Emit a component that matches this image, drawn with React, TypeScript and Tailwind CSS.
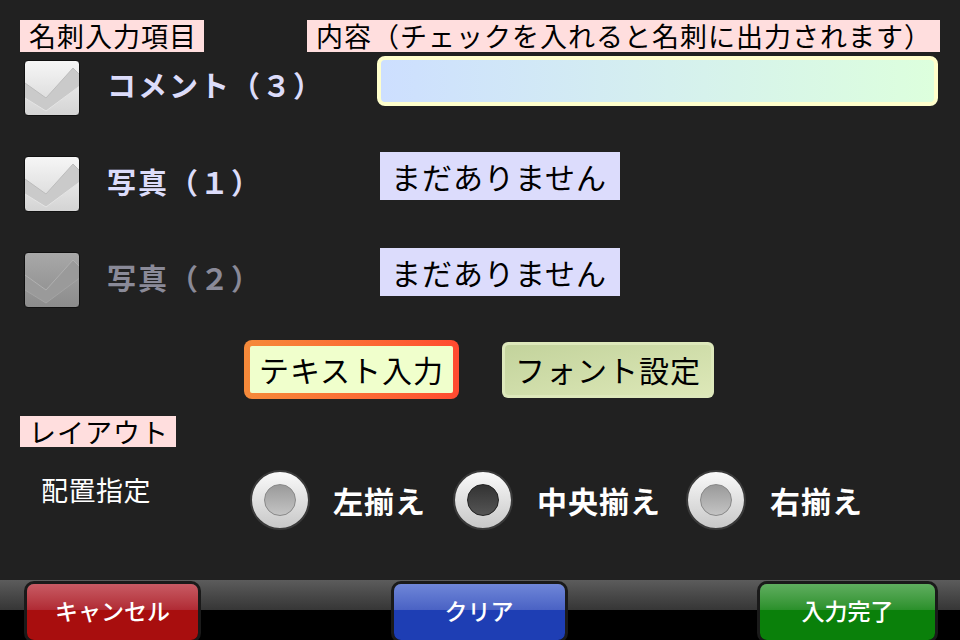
const font = { fontFamily: '"Noto Sans CJK JP", "Noto Sans", sans-serif' };

const CheckBox = ({ disabled }: { disabled?: boolean }) => (
  <div
    className={
      "w-[56px] h-[56px] rounded-[4px] border border-[#111] overflow-hidden " +
      (disabled
        ? "bg-gradient-to-b from-[#a8a8a8] to-[#8c8c8c]"
        : "bg-gradient-to-b from-[#f6f6f6] to-[#d4d4d4]")
    }
  >
    <svg width="56" height="56" viewBox="0 0 56 56">
      <polygon
        points="0,22 21,37 48,7 56,15 56,24 21,50 0,37"
        fill={disabled ? "#9a9a9a" : "#cacaca"}
      />
      <polyline
        points="0,22 21,37 48,7 56,15"
        fill="none"
        stroke={disabled ? "#b0b0b0" : "#bcbcbc"}
        strokeWidth="1"
      />
      <polyline
        points="0,37 21,50 56,24"
        fill="none"
        stroke={disabled ? "#a4a4a4" : "#e4e4e4"}
        strokeWidth="1"
      />
    </svg>
  </div>
);

const Radio = ({ checked }: { checked?: boolean }) => (
  <div className="w-[60px] h-[60px] rounded-full border-2 border-[#3a3a3a] bg-gradient-to-b from-[#fafafa] to-[#c8c8c8] flex items-center justify-center">
    <div
      className={
        "w-[32px] h-[32px] rounded-full border " +
        (checked
          ? "border-[#222] bg-gradient-to-b from-[#333] to-[#555]"
          : "border-[#888] bg-gradient-to-b from-[#9a9a9a] to-[#c4c4c4]")
      }
    />
  </div>
);

const ToolButton = ({ label, tone, width }: { label: string; tone: string; width: string }) => (
  <div className={`${width} h-[62px] rounded-[10px] border-[3px] border-[#1a1a1a] overflow-hidden flex flex-col relative`}>
    <div className={`h-[26px] ${tone === "red" ? "bg-gradient-to-b from-[#c85a64] to-[#b02a34]" : tone === "blue" ? "bg-gradient-to-b from-[#6f86d8] to-[#4a62c4]" : "bg-gradient-to-b from-[#5fae5f] to-[#2a902a]"}`} />
    <div className={`flex-1 ${tone === "red" ? "bg-[#a80e0e]" : tone === "blue" ? "bg-[#1e3eb4]" : "bg-[#0a800a]"}`} />
    <div className="absolute inset-x-0 top-0 h-[52px] flex items-center justify-center text-white text-[23px] font-medium" style={font}>
      {label}
    </div>
  </div>
);

const App = () => {
  return (
    <div className="w-[960px] h-[640px] bg-[#212121] flex flex-col overflow-hidden [text-spacing-trim:space-all]" style={font}>
      <div className="flex-1 flex flex-col">
        <div className="flex mt-[20px] ml-[20px]">
          <div className="w-[184px] h-[32px] bg-[#ffdede] text-black text-[27px] leading-[32px] pl-[9px] tracking-[1px] whitespace-nowrap">
            名刺入力項目
          </div>
          <div className="ml-[103px] w-[633px] h-[32px] bg-[#ffdede] text-black text-[27px] leading-[32px] pl-[9px] tracking-[1px] whitespace-nowrap">
            内容（チェックを入れると名刺に出力されます）
          </div>
        </div>

        <div className="flex h-[96px] mt-[4px]">
          <div className="ml-[24px] mt-[4px]">
            <CheckBox />
          </div>
          <div className="ml-[27px] w-[270px] h-[58px] flex items-center text-[29px] font-bold tracking-[2px] text-[#dcdcfa] whitespace-nowrap">
            コメント（３）
          </div>
          <div className="w-[561px] h-[50px] rounded-[8px] border-[4px] border-[#ffffcc] bg-gradient-to-r from-[#cddfff] to-[#ddffdd]" />
        </div>

        <div className="flex h-[96px]">
          <div className="ml-[24px] mt-[4px]">
            <CheckBox />
          </div>
          <div className="ml-[27px] w-[273px] h-[60px] flex items-center text-[29px] font-bold tracking-[2px] text-[#dcdcfa] whitespace-nowrap">
            写真（１）
          </div>
          <div className="w-[240px] h-[48px] bg-[#dcdcfc] text-black text-[30px] leading-[48px] pl-[11px] tracking-[1px] whitespace-nowrap">
            まだありません
          </div>
        </div>

        <div className="flex h-[92px]">
          <div className="ml-[24px] mt-[4px]">
            <CheckBox disabled />
          </div>
          <div className="ml-[27px] w-[273px] h-[60px] flex items-center text-[29px] font-bold tracking-[2px] text-[#8a8a98] whitespace-nowrap">
            写真（２）
          </div>
          <div className="w-[240px] h-[48px] bg-[#dcdcfc] text-black text-[30px] leading-[48px] pl-[11px] tracking-[1px] whitespace-nowrap">
            まだありません
          </div>
        </div>

        <div className="flex items-center ml-[244px] gap-[43px] h-[59px]">
          <div className="w-[215px] h-[59px] rounded-[8px] p-[6px] bg-gradient-to-r from-[#f58a3a] to-[#ff4a30]">
            <div className="w-full h-full bg-[#f0ffcc] rounded-[2px] flex items-center justify-center text-black text-[30px] tracking-[1px] whitespace-nowrap">
              テキスト入力
            </div>
          </div>
          <div className="w-[212px] h-[56px] rounded-[6px] p-[3px] bg-[#dde8bb]">
            <div className="w-full h-full rounded-[4px] bg-gradient-to-br from-[#c3d39c] to-[#dde8b8] flex items-center justify-center text-black text-[30px] tracking-[1px] whitespace-nowrap">
              フォント設定
            </div>
          </div>
        </div>

        <div className="mt-[17px] ml-[20px] w-[156px] h-[31px] bg-[#ffdede] text-black text-[27px] leading-[31px] pl-[9px] tracking-[1px] whitespace-nowrap">
          レイアウト
        </div>

        <div className="flex items-start mt-[23px]">
          <div className="ml-[41px] w-[209px] h-[40px] flex items-center text-white text-[27px] tracking-[0.5px] whitespace-nowrap">
            配置指定
          </div>
          <div className="flex items-center">
            <Radio />
            <div className="ml-[23px] w-[120px] text-white text-[30px] tracking-[1px] font-bold whitespace-nowrap">左揃え</div>
            <Radio checked />
            <div className="ml-[24px] w-[149px] text-white text-[30px] tracking-[1px] font-bold whitespace-nowrap">中央揃え</div>
            <Radio />
            <div className="ml-[24px] text-white text-[30px] tracking-[1px] font-bold whitespace-nowrap">右揃え</div>
          </div>
        </div>
      </div>

      <div className="h-[60px] relative shrink-0">
        <div className="absolute inset-x-0 top-0 h-[30px] bg-gradient-to-b from-[#5c5c5c] to-[#363636]" />
        <div className="absolute inset-x-0 top-[30px] bottom-0 bg-black" />
        <div className="relative flex justify-between pl-[24px] pr-[22px] pt-[1px]">
          <ToolButton label="キャンセル" tone="red" width="w-[177px]" />
          <ToolButton label="クリア" tone="blue" width="w-[177px]" />
          <ToolButton label="入力完了" tone="green" width="w-[181px]" />
        </div>
      </div>
    </div>
  );
};

export default App;
